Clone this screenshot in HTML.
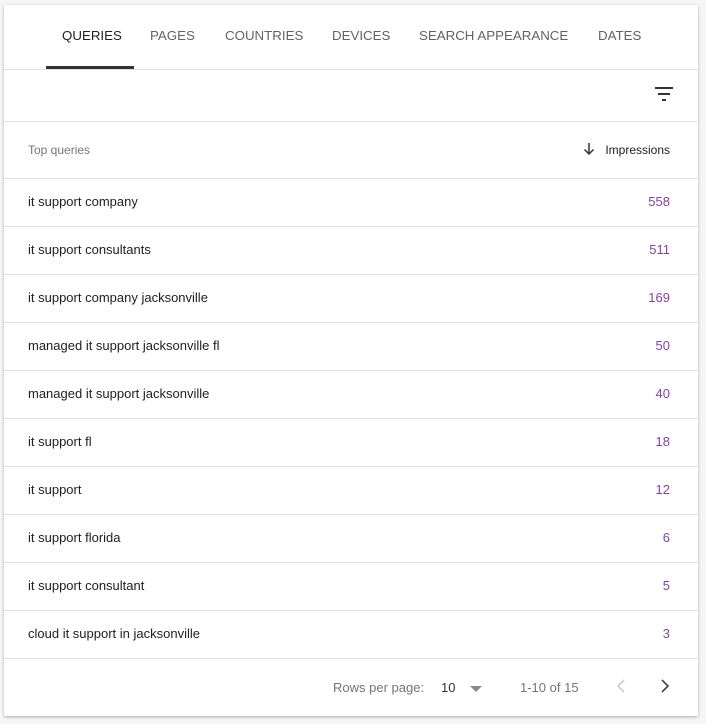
<!DOCTYPE html>
<html><head><style>
body{margin:0;background:#f6f6f6;width:706px;height:724px;overflow:hidden;font-family:"Liberation Sans",Arial,sans-serif;}
.card{position:absolute;left:4px;top:5px;width:694px;height:711px;background:#fff;box-shadow:0 1px 3px rgba(0,0,0,.3);}
.tabs{height:64px;border-bottom:1px solid #e0e0e0;position:relative;}
.tab{position:absolute;top:23px;font-size:13.3px;color:#5f6368;}
.tab.a{color:#202124}
.ind{position:absolute;left:42px;width:88px;top:61px;height:3px;background:#333;}
.filter{height:51px;border-bottom:1px solid #e0e0e0;position:relative;}
.hdr{height:56px;border-bottom:1px solid #e0e0e0;position:relative;font-size:12px;}
.row{height:47px;border-bottom:1px solid #e0e0e0;position:relative;font-size:13px;color:#202124;}
.row span{position:absolute;top:15px;}
.l{left:24px}.r{right:28px;color:#8e3dab}
.foot{position:relative;height:58px;font-size:13px;color:#757575;}
</style></head><body>
<div class="card">
<div class="tabs">
<div class="tab a" style="left:58px">QUERIES</div>
<div class="tab" style="left:146px">PAGES</div>
<div class="tab" style="left:221px">COUNTRIES</div>
<div class="tab" style="left:328px">DEVICES</div>
<div class="tab" style="left:415px">SEARCH APPEARANCE</div>
<div class="tab" style="left:594px">DATES</div>
<div class="ind"></div>
</div>
<div class="filter">
<svg style="position:absolute;left:650px;top:15px" width="20" height="16"><rect x="1" y="2" width="18" height="2" fill="#333"/><rect x="4" y="8" width="12" height="2" fill="#333"/><rect x="8" y="14" width="4" height="2" fill="#333"/></svg>
</div>
<div class="hdr">
<span style="position:absolute;left:24px;top:21px;color:#757575">Top queries</span>
<svg style="position:absolute;left:579px;top:20px" width="12" height="14"><path d="M6 1v11M1.5 7.5L6 12l4.5-4.5" stroke="#333" stroke-width="1.5" fill="none"/></svg>
<span style="position:absolute;right:28px;top:21px;color:#202124">Impressions</span>
</div>
<div class="row"><span class="l">it support company</span><span class="r">558</span></div>
<div class="row"><span class="l">it support consultants</span><span class="r">511</span></div>
<div class="row"><span class="l">it support company jacksonville</span><span class="r">169</span></div>
<div class="row"><span class="l">managed it support jacksonville fl</span><span class="r">50</span></div>
<div class="row"><span class="l">managed it support jacksonville</span><span class="r">40</span></div>
<div class="row"><span class="l">it support fl</span><span class="r">18</span></div>
<div class="row"><span class="l">it support</span><span class="r">12</span></div>
<div class="row"><span class="l">it support florida</span><span class="r">6</span></div>
<div class="row"><span class="l">it support consultant</span><span class="r">5</span></div>
<div class="row"><span class="l">cloud it support in jacksonville</span><span class="r">3</span></div>
<div class="foot">
<span style="position:absolute;left:329px;top:21px">Rows per page:</span>
<span style="position:absolute;left:437px;top:21px;color:#333">10</span>
<svg style="position:absolute;left:466px;top:27px" width="12" height="6"><path d="M0 0h12L6 6z" fill="#888"/></svg>
<span style="position:absolute;left:516px;top:21px">1-10 of 15</span>
<svg style="position:absolute;left:612px;top:20px" width="10" height="14"><path d="M8 1L2 7l6 6" stroke="#ccc" stroke-width="1.6" fill="none"/></svg>
<svg style="position:absolute;left:656px;top:20px" width="10" height="14"><path d="M2 1l6 6-6 6" stroke="#444" stroke-width="1.6" fill="none"/></svg>
</div>
</div>
</body></html>
